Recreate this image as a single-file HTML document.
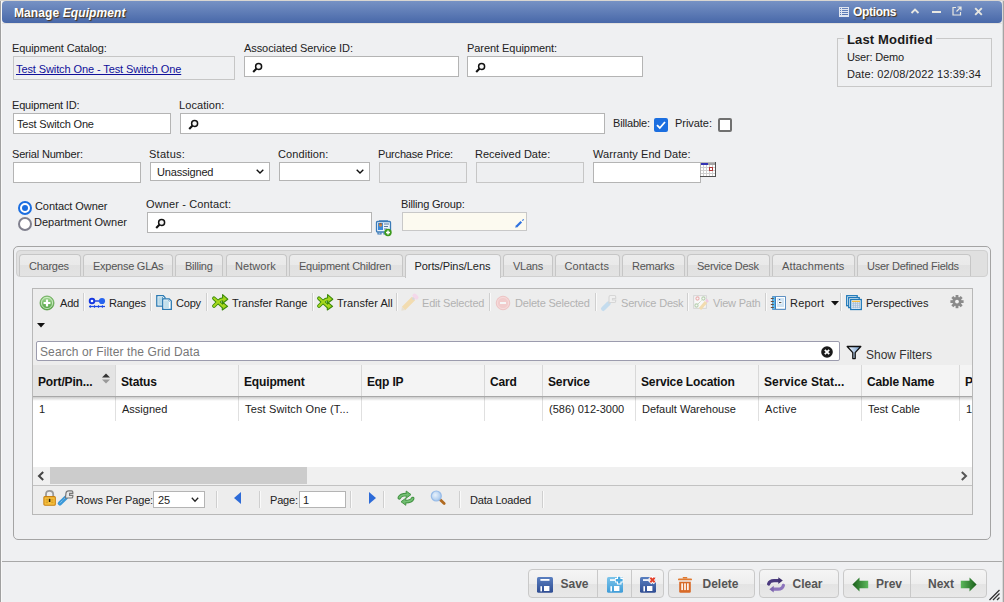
<!DOCTYPE html>
<html><head><meta charset="utf-8">
<style>
*{box-sizing:border-box;margin:0;padding:0}
html,body{width:1004px;height:602px;overflow:hidden;background:#eff0f2;font-family:"Liberation Sans",sans-serif;font-size:11px;color:#222}
.a{position:absolute}
svg.a{overflow:visible}
.t{position:absolute;white-space:nowrap;line-height:15px;letter-spacing:-0.18px}
.box{position:absolute;background:#fff;border:1px solid #b4b4b4}
.dis{background:#eeeff1;border-color:#c6c6c6}
.tt{color:#fff;font-weight:bold;font-size:12px;text-shadow:1px 1px 1px #4a3010;letter-spacing:0.1px}
.link{color:#10109a;text-decoration:underline}
.tab{position:absolute;top:254px;height:22px;border:1px solid #c6c6c6;border-bottom:none;border-radius:4px 4px 0 0;background:linear-gradient(#ececec 0,#e9e9e9 50%,#e1e1e1 50%,#e3e3e3 100%);color:#555;line-height:22px;padding-left:9px;letter-spacing:-0.25px;white-space:nowrap}
.tab.act{background:#eff0f2;color:#222;height:24px;z-index:2}
.tb{position:absolute;top:296px;line-height:14px;color:#222;white-space:nowrap;letter-spacing:-0.2px}
.tb.d{color:#b2b2b2}
.sep{position:absolute;top:293px;width:1px;height:18px;background:#cfcfcf;box-shadow:1px 0 0 #fafafa}
.psep{position:absolute;top:491px;width:1px;height:17px;background:#cfcfcf;box-shadow:1px 0 0 #fafafa}
.hd{position:absolute;top:365px;height:31px;line-height:35px;font-weight:bold;font-size:12px;letter-spacing:-0.15px;color:#111;padding-left:5px;border-right:1px solid #d8d8d8;white-space:nowrap;background:#f4f4f4}
.cell{position:absolute;top:396px;height:25px;line-height:27px;color:#222;padding-left:6px;border-right:1px solid #e0e0e0;white-space:nowrap}
.btn{position:absolute;top:569px;height:29px;border:1px solid #c9c9c9;border-radius:4px;background:linear-gradient(#f5f5f5 0,#eeeeee 50%,#e4e4e4 52%,#e8e8e8 100%);font-weight:bold;color:#555;font-size:12px}
.btn span{position:absolute;top:7px;line-height:15px}
.vd{position:absolute;top:0;width:1px;height:27px;background:#c9c9c9}
</style></head><body>
<div class="a" style="left:0;top:0;width:1px;height:602px;background:#a0a0a0"></div>
<div class="a" style="left:1px;top:0;width:1px;height:602px;background:#f8f8f8"></div>
<div class="a" style="left:1002px;top:0;width:2px;height:602px;background:#d9d9d9"></div>
<div class="a" style="left:1003px;top:0;width:1px;height:602px;background:#a4a4a4"></div>
<div class="a" style="left:0;top:0;width:1004px;height:1px;background:#d9d6d1"></div>
<div class="a" style="left:2px;top:23px;width:1000px;height:1px;background:#e3e1de"></div>
<div class="a" style="left:2px;top:1px;width:1000px;height:22px;border-radius:4px;background:linear-gradient(#7792c4,#4868a9)"></div>
<div class="t tt" style="left:14px;top:6px;line-height:15px">Manage <i>Equipment</i></div>
<!-- options -->
<svg class="a" style="left:839px;top:7px" width="10" height="10" viewBox="0 0 10 10"><g fill="none" stroke="#dfe5f0" stroke-width="1"><rect x="0.5" y="0.5" width="9" height="9"/><path d="M0 2.5H10M0 4.5H10M0 6.5H10M0 8.5H10M2.5 0V10"/></g></svg>
<div class="t tt" style="left:853px;top:5px;letter-spacing:-0.3px">Options</div>
<svg class="a" style="left:910px;top:7px" width="10" height="8" viewBox="0 0 10 8"><path d="M1.5 6L5 2.5L8.5 6" fill="none" stroke="#e8e8e2" stroke-width="1.8"/></svg>
<div class="a" style="left:932px;top:11px;width:9px;height:2px;background:#e8e8e2"></div>
<svg class="a" style="left:952px;top:6px" width="10" height="10" viewBox="0 0 10 10"><g fill="none" stroke="#e8e8e2" stroke-width="1.2"><path d="M4 1.5H1V9H8.5V6"/><path d="M5.5 1H9V4.5M9 1L4.5 5.5"/></g></svg>
<svg class="a" style="left:974px;top:7px" width="9" height="9" viewBox="0 0 9 9"><path d="M1.2 1.2L7.8 7.8M7.8 1.2L1.2 7.8" stroke="#e6e6e0" stroke-width="1.9"/></svg>

<!-- row 1 -->
<div class="t" style="left:12px;top:41px;letter-spacing:-0.1px">Equipment Catalog:</div>
<div class="box dis" style="left:13px;top:56px;width:222px;height:24px;background:#eff0f2"></div>
<div class="t link" style="left:16px;top:62px;letter-spacing:-0.1px">Test Switch One - Test Switch One</div>
<div class="t" style="left:244px;top:41px;letter-spacing:-0.08px">Associated Service ID:</div>
<div class="box" style="left:244px;top:56px;width:215px;height:21px"></div>
<div class="t" style="left:467px;top:41px;letter-spacing:-0.06px">Parent Equipment:</div>
<div class="box" style="left:467px;top:56px;width:176px;height:21px"></div>

<!-- last modified -->
<div class="a" style="left:837px;top:38px;width:155px;height:49px;border:1px solid #c8c8c8"></div>
<div class="t" style="left:844px;top:32px;padding:0 3px;background:#eff0f2;font-weight:bold;font-size:13px;color:#1a1a1a;letter-spacing:0.15px">Last Modified</div>
<div class="t" style="left:847px;top:50px">User: Demo</div>
<div class="t" style="left:847px;top:67px;letter-spacing:0.15px">Date: 02/08/2022 13:39:34</div>

<!-- row 2 -->
<div class="t" style="left:12px;top:98px">Equipment ID:</div>
<div class="box" style="left:13px;top:113px;width:158px;height:21px"></div>
<div class="t" style="left:17px;top:117px">Test Switch One</div>
<div class="t" style="left:179px;top:98px;letter-spacing:0.07px">Location:</div>
<div class="box" style="left:180px;top:113px;width:425px;height:21px"></div>
<div class="t" style="left:613px;top:116px">Billable:</div>
<div class="a" style="left:654px;top:118px;width:14px;height:14px;border-radius:2px;background:#1b6ee0"></div>
<svg class="a" style="left:654px;top:118px" width="14" height="14" viewBox="0 0 14 14"><path d="M3 7.2L5.8 10L11 4" fill="none" stroke="#fff" stroke-width="1.8"/></svg>
<div class="t" style="left:675px;top:116px;letter-spacing:-0.05px">Private:</div>
<div class="a" style="left:718px;top:118px;width:14px;height:14px;border-radius:2px;border:2px solid #707070;background:#fff"></div>

<!-- row 3 -->
<div class="t" style="left:12px;top:147px">Serial Number:</div>
<div class="box" style="left:13px;top:162px;width:128px;height:21px"></div>
<div class="t" style="left:149px;top:147px;letter-spacing:0.28px">Status:</div>
<div class="box" style="left:150px;top:162px;width:120px;height:19px"></div>
<div class="t" style="left:157px;top:165px">Unassigned</div>
<svg class="a" style="left:256px;top:169px" width="8" height="5" viewBox="0 0 8 5"><path d="M0.7 0.7L4 4L7.3 0.7" fill="none" stroke="#111" stroke-width="1.4"/></svg>
<div class="t" style="left:278px;top:147px;letter-spacing:0.09px">Condition:</div>
<div class="box" style="left:279px;top:162px;width:91px;height:19px"></div>
<svg class="a" style="left:356px;top:169px" width="8" height="5" viewBox="0 0 8 5"><path d="M0.7 0.7L4 4L7.3 0.7" fill="none" stroke="#111" stroke-width="1.4"/></svg>
<div class="t" style="left:378px;top:147px">Purchase Price:</div>
<div class="box dis" style="left:379px;top:162px;width:88px;height:21px"></div>
<div class="t" style="left:475px;top:147px;letter-spacing:0px">Received Date:</div>
<div class="box dis" style="left:476px;top:162px;width:108px;height:21px"></div>
<div class="t" style="left:593px;top:147px;letter-spacing:0.08px">Warranty End Date:</div>
<div class="box" style="left:593px;top:162px;width:108px;height:21px"></div>

<!-- row 4 -->
<div class="a" style="left:18px;top:201px;width:14px;height:14px;border-radius:50%;border:2px solid #1b6ee0;background:#fff"></div>
<div class="a" style="left:22px;top:205px;width:6px;height:6px;border-radius:50%;background:#1b6ee0"></div>
<div class="t" style="left:35px;top:199px;letter-spacing:-0.08px">Contact Owner</div>
<div class="a" style="left:18px;top:217px;width:14px;height:14px;border-radius:50%;border:2px solid #80808e;background:#fff"></div>
<div class="t" style="left:34px;top:215px;letter-spacing:0px">Department Owner</div>
<div class="t" style="left:146px;top:197px;letter-spacing:0.13px">Owner - Contact:</div>
<div class="box" style="left:147px;top:212px;width:225px;height:21px"></div>
<div class="t" style="left:401px;top:197px">Billing Group:</div>
<div class="box" style="left:402px;top:212px;width:125px;height:19px;background:#fcfaf0;border-color:#c8c8c8"></div>

<!-- tab panel -->
<div class="a" style="left:13px;top:246px;width:978px;height:294px;border:1px solid #a4a4a4;border-radius:5px"></div>
<div class="a" style="left:16px;top:250px;width:972px;height:27px;border:1px solid #d0d0d0;border-radius:4px;background:#e0e0e0"></div>
<div class="tab" style="left:19px;width:62px">Charges</div>
<div class="tab" style="left:83px;width:90px">Expense GLAs</div>
<div class="tab" style="left:175px;width:48px">Billing</div>
<div class="tab" style="left:226px;width:61px;padding-left:8px;letter-spacing:0.05px">Network</div>
<div class="tab" style="left:289px;width:114px">Equipment Children</div>
<div class="tab act" style="left:405px;width:96px;padding-left:8.5px;letter-spacing:-0.08px">Ports/Pins/Lens</div>
<div class="tab" style="left:503px;width:50px">VLans</div>
<div class="tab" style="left:555px;width:65px;padding-left:8.5px;letter-spacing:0.14px">Contacts</div>
<div class="tab" style="left:622px;width:63px">Remarks</div>
<div class="tab" style="left:687px;width:83px">Service Desk</div>
<div class="tab" style="left:772px;width:83px;letter-spacing:0.12px">Attachments</div>
<div class="tab" style="left:857px;width:114px">User Defined Fields</div>

<!-- grid panel -->
<div class="a" style="left:32px;top:288px;width:941px;height:227px;border:1px solid #b8b8b8;background:#ededed"></div>
<div class="tb" style="left:60px">Add</div>
<div class="sep" style="left:83px"></div>
<div class="tb" style="left:109px">Ranges</div>
<div class="sep" style="left:150px"></div>
<div class="tb" style="left:176px">Copy</div>
<div class="sep" style="left:206px"></div>
<div class="tb" style="left:232px;letter-spacing:-0.05px">Transfer Range</div>
<div class="sep" style="left:312px"></div>
<div class="tb" style="left:337px;letter-spacing:0.05px">Transfer All</div>
<div class="sep" style="left:396px"></div>
<div class="tb d" style="left:422px">Edit Selected</div>
<div class="sep" style="left:489px"></div>
<div class="tb d" style="left:515px">Delete Selected</div>
<div class="sep" style="left:595px"></div>
<div class="tb d" style="left:621px">Service Desk</div>
<div class="sep" style="left:687px"></div>
<div class="tb d" style="left:713px">View Path</div>
<div class="sep" style="left:765px"></div>
<div class="tb" style="left:790px;letter-spacing:0.2px">Report</div>
<div class="sep" style="left:840px"></div>
<div class="tb" style="left:866px;letter-spacing:-0.05px">Perspectives</div>
<svg class="a" style="left:37px;top:323px" width="8" height="5" viewBox="0 0 8 5"><path d="M0 0H8L4 4.5Z" fill="#111"/></svg>

<div class="box" style="left:36px;top:341px;width:804px;height:20px;border-radius:2px;border-color:#9c9cae"></div>
<div class="t" style="left:40px;top:345px;font-size:12px;color:#777;letter-spacing:0;letter-spacing:0.1px">Search or Filter the Grid Data</div>
<div class="t" style="left:866px;top:348px;font-size:12px;color:#333;letter-spacing:0">Show Filters</div>

<!-- grid -->
<div class="a" style="left:33px;top:365px;width:939px;height:102px;background:#fff"></div>
<div class="hd" style="left:33px;width:83px; background:#e4e4e4">Port/Pin...</div>
<div class="hd" style="left:116px;width:123px;">Status</div>
<div class="hd" style="left:239px;width:123px;">Equipment</div>
<div class="hd" style="left:362px;width:123px;">Eqp IP</div>
<div class="hd" style="left:485px;width:58px;">Card</div>
<div class="hd" style="left:543px;width:93px;">Service</div>
<div class="hd" style="left:636px;width:123px;">Service Location</div>
<div class="hd" style="left:759px;width:103px;letter-spacing:0.12px">Service Stat...</div>
<div class="hd" style="left:862px;width:98px;">Cable Name</div>
<div class="hd" style="left:960px;width:12px;border-right:none;overflow:hidden;">P</div>
<svg class="a" style="left:102px;top:373px" width="8" height="12" viewBox="0 0 8 12"><path d="M0 4.5L4 0.5L8 4.5Z" fill="#333"/><path d="M0 6.5L4 10.5L8 6.5Z" fill="#999"/></svg>
<div class="cell" style="left:33px;width:83px;">1</div>
<div class="cell" style="left:116px;width:123px;">Assigned</div>
<div class="cell" style="left:239px;width:123px;letter-spacing:0.15px">Test Switch One (T...</div>
<div class="cell" style="left:362px;width:123px;"></div>
<div class="cell" style="left:485px;width:58px;"></div>
<div class="cell" style="left:543px;width:93px;">(586) 012-3000</div>
<div class="cell" style="left:636px;width:123px;">Default Warehouse</div>
<div class="cell" style="left:759px;width:103px;letter-spacing:0.35px">Active</div>
<div class="cell" style="left:862px;width:98px;">Test Cable</div>
<div class="cell" style="left:960px;width:12px;border-right:none;overflow:hidden;">1</div>
<div class="a" style="left:33px;top:396px;width:939px;height:1px;background:#a8a8a8"></div>
<div class="a" style="left:33px;top:397px;width:939px;height:4px;background:linear-gradient(rgba(0,0,0,0.2),rgba(0,0,0,0))"></div>
<!-- scrollbar -->
<div class="a" style="left:33px;top:467px;width:939px;height:18px;background:#f0f0f0"></div>
<div class="a" style="left:50px;top:467px;width:257px;height:17px;background:#cccccc"></div>
<svg class="a" style="left:37px;top:471px" width="8" height="10" viewBox="0 0 8 10"><path d="M6.2 1L2 5L6.2 9" fill="none" stroke="#444" stroke-width="2"/></svg>
<svg class="a" style="left:960px;top:471px" width="8" height="10" viewBox="0 0 8 10"><path d="M1.8 1L6 5L1.8 9" fill="none" stroke="#555" stroke-width="2"/></svg>
<!-- pager -->
<div class="a" style="left:33px;top:485px;width:939px;height:1px;background:#c2c2c2"></div>
<div class="t" style="left:76px;top:493px">Rows Per Page:</div>
<div class="box" style="left:153px;top:491px;width:52px;height:17px"></div>
<div class="t" style="left:158px;top:493px">25</div>
<svg class="a" style="left:191px;top:497px" width="8" height="6" viewBox="0 0 8 6"><path d="M0.8 0.8L4 4.2L7.2 0.8" fill="none" stroke="#222" stroke-width="1.3"/></svg>
<div class="psep" style="left:216px"></div>
<svg class="a" style="left:234px;top:492px" width="7" height="12" viewBox="0 0 7 12"><path d="M7 0L0 6L7 12Z" fill="#2d6bd8"/></svg>
<div class="psep" style="left:259px"></div>
<div class="t" style="left:270px;top:493px">Page:</div>
<div class="box" style="left:299px;top:491px;width:47px;height:17px"></div>
<div class="t" style="left:303px;top:493px">1</div>
<div class="psep" style="left:350px"></div>
<svg class="a" style="left:369px;top:492px" width="7" height="12" viewBox="0 0 7 12"><path d="M0 0L7 6L0 12Z" fill="#2d6bd8"/></svg>
<div class="psep" style="left:383px"></div>
<div class="psep" style="left:459px"></div>
<div class="t" style="left:470px;top:493px">Data Loaded</div>
<div class="psep" style="left:542px"></div>

<!-- bottom -->
<div class="a" style="left:2px;top:561px;width:1000px;height:1px;background:#a8a8a8"></div>
<div class="btn" style="left:528px;width:136px"><span style="left:31.5px">Save</span><div class="vd" style="left:68px"></div><div class="vd" style="left:102px"></div></div>
<div class="btn" style="left:668px;width:87px"><span style="left:33.5px">Delete</span></div>
<div class="btn" style="left:759px;width:80px"><span style="left:32.5px">Clear</span></div>
<div class="btn" style="left:843px;width:144px"><span style="left:32px">Prev</span><div class="vd" style="left:66px"></div><span style="left:84px">Next</span></div>
<!-- icons -->
<svg class="a" style="left:252px;top:62px" width="11" height="11" viewBox="0 0 11 11"><circle cx="6.6" cy="4.4" r="3" fill="#f6f6f6" stroke="#111" stroke-width="1.5"/><path d="M4.6 6.5L1.2 9.9" stroke="#111" stroke-width="2.1"/></svg>
<svg class="a" style="left:475px;top:62px" width="11" height="11" viewBox="0 0 11 11"><circle cx="6.6" cy="4.4" r="3" fill="#f6f6f6" stroke="#111" stroke-width="1.5"/><path d="M4.6 6.5L1.2 9.9" stroke="#111" stroke-width="2.1"/></svg>
<svg class="a" style="left:188px;top:119px" width="11" height="11" viewBox="0 0 11 11"><circle cx="6.6" cy="4.4" r="3" fill="#f6f6f6" stroke="#111" stroke-width="1.5"/><path d="M4.6 6.5L1.2 9.9" stroke="#111" stroke-width="2.1"/></svg>
<svg class="a" style="left:155px;top:218px" width="11" height="11" viewBox="0 0 11 11"><circle cx="6.6" cy="4.4" r="3" fill="#f6f6f6" stroke="#111" stroke-width="1.5"/><path d="M4.6 6.5L1.2 9.9" stroke="#111" stroke-width="2.1"/></svg>
<svg class="a" style="left:700px;top:162px" width="17" height="16" viewBox="0 0 17 16" shape-rendering="crispEdges">
<rect x="0" y="0" width="16" height="15" fill="#cfcfcf"/>
<rect x="0" y="0" width="16" height="1" fill="#b8b8b8"/>
<rect x="1" y="1" width="7" height="2" fill="#3434b4"/><rect x="8" y="1" width="7" height="2" fill="#a4a4a4"/>
<rect x="1" y="3" width="2" height="2" fill="#fff"/><rect x="1" y="6" width="2" height="2" fill="#fff"/><rect x="1" y="9" width="2" height="2" fill="#fff"/><rect x="1" y="12" width="2" height="2" fill="#fff"/><rect x="4" y="3" width="2" height="2" fill="#fff"/><rect x="4" y="6" width="2" height="2" fill="#fff"/><rect x="4" y="9" width="2" height="2" fill="#fff"/><rect x="4" y="12" width="2" height="2" fill="#fff"/><rect x="7" y="3" width="2" height="2" fill="#fff"/><rect x="7" y="6" width="2" height="2" fill="#fff"/><rect x="7" y="9" width="2" height="2" fill="#fff"/><rect x="7" y="12" width="2" height="2" fill="#fff"/><rect x="10" y="3" width="2" height="2" fill="#fff"/><rect x="10" y="6" width="2" height="2" fill="#fff"/><rect x="10" y="9" width="2" height="2" fill="#fff"/><rect x="10" y="12" width="2" height="2" fill="#fff"/><rect x="13" y="3" width="2" height="2" fill="#fff"/><rect x="13" y="6" width="2" height="2" fill="#fff"/><rect x="13" y="9" width="2" height="2" fill="#fff"/><rect x="13" y="12" width="2" height="2" fill="#fff"/>
<rect x="9" y="5" width="4" height="1" fill="#b03a3a"/><rect x="9" y="8" width="4" height="1" fill="#b03a3a"/><rect x="9" y="5" width="1" height="4" fill="#b03a3a"/><rect x="12" y="5" width="1" height="4" fill="#b03a3a"/>
<rect x="15" y="0" width="1" height="15" fill="#505050"/><rect x="0" y="14" width="16" height="1" fill="#505050"/>
<rect x="0" y="0" width="1" height="14" fill="#b4b4b4"/>
</svg>
<svg class="a" style="left:375px;top:219.5px" width="18" height="17" viewBox="0 0 18 17">
<rect x="1.5" y="1.5" width="14" height="10.5" rx="1" fill="#eaf3fb" stroke="#3a7ab8" stroke-width="1.3"/>
<rect x="4" y="0.3" width="9" height="1.2" fill="#3a7ab8"/>
<rect x="3" y="3" width="5" height="7" fill="#3a88d8"/>
<circle cx="5.5" cy="5" r="1.8" fill="#c88a50"/><path d="M3.8 4.2Q5.5 2.3 7.2 4.2" fill="#8a4a20"/>
<path d="M9 4H14M9 6.5H13M9 9H12" stroke="#5a7aa0" stroke-width="1"/>
<path d="M3 12.5V14H6V12.5M9 12.5V14H12" fill="none" stroke="#3a7ab8" stroke-width="1.2"/>
<circle cx="13" cy="12.5" r="3.7" fill="#3d9a1e"/><path d="M13 10.5V14.5M11 12.5H15" stroke="#fff" stroke-width="1.5"/>
</svg>
<svg class="a" style="left:514px;top:218px" width="11" height="11" viewBox="0 0 11 11">
<path d="M2.3 8.7L7.3 3.7" stroke="#2f72e0" stroke-width="2.2"/><path d="M1.2 9.8L1.9 7.6L3.4 9.1Z" fill="#2f72e0"/><path d="M8.6 1.6L9.4 2.4" stroke="#2f72e0" stroke-width="2"/>
</svg>
<svg class="a" style="left:39px;top:295px" width="16" height="16" viewBox="0 0 16 16">
<defs><linearGradient id="ga" x1="0" y1="0" x2="0" y2="1"><stop offset="0" stop-color="#a6dc98"/><stop offset="1" stop-color="#4e9e3e"/></linearGradient></defs>
<circle cx="8" cy="8" r="7" fill="url(#ga)" stroke="#5aa048" stroke-width="0.8"/><circle cx="8" cy="8" r="5.6" fill="none" stroke="#e4f4de" stroke-width="0.9" opacity="0.8"/>
<path d="M8 4.6V11.4M4.6 8H11.4" stroke="#fff" stroke-width="2.2"/>
</svg>
<svg class="a" style="left:88px;top:296px" width="18" height="14" viewBox="0 0 18 14">
<circle cx="4" cy="5" r="2.3" fill="#fff" stroke="#1436e0" stroke-width="1.9"/>
<path d="M6.2 5H11.5" stroke="#1a40e0" stroke-width="1.4"/>
<circle cx="14" cy="5" r="3.1" fill="#2664ee"/>
<path d="M1 10.5H17" stroke="#1a48e6" stroke-width="1.2"/>
<path d="M2.3 9.2V11.8M6.5 9.2V11.8M10.5 9.2V11.8M14.4 9.2V11.8" stroke="#1a48e6" stroke-width="1.1"/>
</svg>
<svg class="a" style="left:154px;top:292px" width="20" height="20" viewBox="0 0 20 20">
<path d="M2.8 3.7H9.3L11 5.4V14.2H2.8Z" fill="#fff" stroke="#2a7ab2" stroke-width="1.3"/>
<rect x="4.2" y="5.2" width="4.6" height="7.6" fill="#b6d9e8"/>
<path d="M8.7 6.8H15.2L17.3 8.9V17.4H8.7Z" fill="#fff" stroke="#2a7ab2" stroke-width="1.3"/>
<rect x="10.1" y="8.3" width="4.8" height="7.8" fill="#c2e0ec"/>
<path d="M8.3 5.3L9.5 6.3M14.5 8.3L15.7 9.3" stroke="#2a7ab2" stroke-width="1"/>
</svg>
<svg class="a" style="left:209px;top:292px" width="22" height="20" viewBox="0 0 22 20">
<g fill="none" stroke="#3a8a0a" stroke-width="3.8" stroke-linecap="round"><path d="M5 6.3L13.5 14"/><path d="M5 14L9.5 9.5Q11.5 7.2 14 7.2"/></g>
<path d="M13.6 2.6L18.8 7.2L13.6 11.2Z" fill="#a4d41c" stroke="#3a8a0a" stroke-width="1.1" stroke-linejoin="round"/>
<path d="M13.3 9.8L18.6 14.3L13.3 18Z" fill="#a4d41c" stroke="#3a8a0a" stroke-width="1.1" stroke-linejoin="round"/>
<g fill="none" stroke="#a6d81e" stroke-width="2" stroke-linecap="round"><path d="M5 6.3L13.8 14.2"/><path d="M5 14L9.5 9.5Q11.5 7.2 14.2 7.2"/></g>
</svg>
<svg class="a" style="left:314px;top:292px" width="22" height="20" viewBox="0 0 22 20">
<g fill="none" stroke="#3a8a0a" stroke-width="3.8" stroke-linecap="round"><path d="M5 6.3L13.5 14"/><path d="M5 14L9.5 9.5Q11.5 7.2 14 7.2"/></g>
<path d="M13.6 2.6L18.8 7.2L13.6 11.2Z" fill="#a4d41c" stroke="#3a8a0a" stroke-width="1.1" stroke-linejoin="round"/>
<path d="M13.3 9.8L18.6 14.3L13.3 18Z" fill="#a4d41c" stroke="#3a8a0a" stroke-width="1.1" stroke-linejoin="round"/>
<g fill="none" stroke="#a6d81e" stroke-width="2" stroke-linecap="round"><path d="M5 6.3L13.8 14.2"/><path d="M5 14L9.5 9.5Q11.5 7.2 14.2 7.2"/></g>
</svg>
<svg class="a" style="left:398px;top:292px" width="22" height="20" viewBox="0 0 22 20">
<path d="M5.5 16.5L15.5 6.5" stroke="#f2dcb0" stroke-width="4.6"/>
<path d="M15 5L17 7" stroke="#d8d8d8" stroke-width="4"/>
<path d="M16.5 3.5L18.5 5.5" stroke="#f4d8ea" stroke-width="4" stroke-linecap="round"/>
<path d="M3.3 18.7L4 14.8L7.3 18Z" fill="#e8e0d0"/>
</svg>
<svg class="a" style="left:492px;top:292px" width="22" height="20" viewBox="0 0 22 20">
<circle cx="11" cy="11" r="6.8" fill="#f1cccc" stroke="#ecc0c0" stroke-width="0.8"/><circle cx="11" cy="11" r="5.6" fill="none" stroke="#f6dede" stroke-width="0.8"/>
<rect x="8" y="10" width="6" height="2" fill="#f6f6f6"/>
</svg>
<svg class="a" style="left:598px;top:292px" width="22" height="20" viewBox="0 0 22 20">
<path d="M5.2 16.8L10.5 11.5" stroke="#c4dcee" stroke-width="4.4" stroke-linecap="round"/>
<path d="M11 11L11 5Q11 3.5 12.5 3.5H16.5Q17.7 3.5 17.7 5V6.5H14.5V8H17.7V9Q17.7 10.5 16.5 10.5H12Z" fill="#f0f0f0" stroke="#d6d6d6" stroke-width="1.1"/>
</svg>
<svg class="a" style="left:690px;top:292px" width="22" height="20" viewBox="0 0 22 20">
<rect x="3.7" y="3.7" width="12.6" height="12.6" fill="#f8f8f8" stroke="#d4d4d4" stroke-width="1"/>
<circle cx="7.5" cy="6.5" r="1.6" fill="none" stroke="#e8b0b0" stroke-width="1.1"/><circle cx="13.4" cy="6.5" r="1.6" fill="none" stroke="#b8d0b0" stroke-width="1.1"/>
<circle cx="6.5" cy="13.5" r="1.6" fill="none" stroke="#b8d0b0" stroke-width="1.1"/>
<path d="M8 12L12 8" stroke="#b8d0b0" stroke-width="1" stroke-dasharray="1 0.8"/>
<path d="M10 17L16 10" stroke="#f2dcb0" stroke-width="3.2"/><path d="M16.2 9.5L18 8" stroke="#f0c8e0" stroke-width="3"/>
</svg>
<svg class="a" style="left:768px;top:292px" width="22" height="20" viewBox="0 0 22 20">
<rect x="4.2" y="4.2" width="13.6" height="13.6" fill="#3c7ab8"/>
<rect x="4.8" y="4.8" width="2.2" height="12.4" fill="#5ab8ec"/>
<rect x="8" y="5" width="9" height="11.8" fill="#fff"/>
<rect x="9" y="6" width="7" height="9" fill="#d0e4f4"/>
<rect x="11" y="7" width="1.2" height="0.9" fill="#2a5aa0"/>
<rect x="10.2" y="9.3" width="3.8" height="2.6" fill="#fff"/><path d="M11 10.6H13.4" stroke="#444" stroke-width="1"/>
<path d="M2.8 6.5H5.8M2.8 9.5H5.8M2.8 12.5H5.8M2.8 15.5H5.8" stroke="#6a5040" stroke-width="1.1"/>
</svg>
<svg class="a" style="left:831px;top:301px" width="8" height="5" viewBox="0 0 8 5"><path d="M0 0H8L4 4.5Z" fill="#111"/></svg>
<svg class="a" style="left:843px;top:292px" width="22" height="20" viewBox="0 0 22 20">
<rect x="3.7" y="3.7" width="10.5" height="10" fill="#fff" stroke="#1e78b8" stroke-width="1.3"/>
<rect x="5.7" y="5.6" width="10.5" height="10" fill="#fff" stroke="#1e78b8" stroke-width="1.3"/>
<rect x="7.7" y="7.5" width="10.6" height="10" fill="#fff" stroke="#1e78b8" stroke-width="1.3"/>
<path d="M9 9.3H17" stroke="#f0b020" stroke-width="1.1"/>
<path d="M9 11.2H17M9 13.2H17M9 15.2H17M10.3 10V16.3M12.3 10V16.3M14.3 10V16.3M16.3 10V16.3" stroke="#9cbad6" stroke-width="0.9"/>
</svg>
<svg class="a" style="left:950px;top:295px" width="14" height="14" viewBox="0 0 14 14">
<g transform="translate(7,6.6)" fill="#8a8a8a">
<circle r="4.6"/>
<rect x="-1.4" y="-6.6" width="2.8" height="13.2"/><rect x="-1.4" y="-6.6" width="2.8" height="13.2" transform="rotate(45)"/><rect x="-1.4" y="-6.6" width="2.8" height="13.2" transform="rotate(90)"/><rect x="-1.4" y="-6.6" width="2.8" height="13.2" transform="rotate(135)"/>
<circle r="1.9" fill="#f2f2f2"/>
</g></svg>
<svg class="a" style="left:821px;top:346px" width="12" height="12" viewBox="0 0 12 12">
<circle cx="6" cy="6" r="5.8" fill="#1a1a1a"/><path d="M3.8 3.8L8.2 8.2M8.2 3.8L3.8 8.2" stroke="#fff" stroke-width="1.8"/>
</svg>
<svg class="a" style="left:846px;top:345px" width="16" height="15" viewBox="0 0 16 15">
<defs><linearGradient id="gf" x1="0" y1="0" x2="1" y2="0"><stop offset="0" stop-color="#ffffff"/><stop offset="1" stop-color="#6a9ad0"/></linearGradient></defs>
<path d="M1.2 1.5H14.8L9.2 7.6V13.6H6.8V7.6Z" fill="url(#gf)" stroke="#111" stroke-width="1.3" stroke-linejoin="round"/>
</svg>
<svg class="a" style="left:41.5px;top:487.5px" width="16" height="18" viewBox="0 0 16 18">
<path d="M4 9V6.3Q4 2.8 7.6 2.8Q11.2 2.8 11.2 6.3V9" fill="none" stroke="#9a9a9a" stroke-width="1.8"/>
<rect x="1.9" y="8.6" width="11.4" height="8.6" rx="1" fill="#f6c242" stroke="#c88010" stroke-width="1.1"/>
<path d="M3.6 11.3H6M3.6 13H6M3.6 14.7H6M9.2 11.3H11.6M9.2 13H11.6M9.2 14.7H11.6" stroke="#d89818" stroke-width="0.9"/>
<rect x="6.8" y="10.8" width="1.6" height="3.2" fill="#2a2008"/>
</svg>
<svg class="a" style="left:57px;top:488px" width="18" height="18" viewBox="0 0 18 18">
<path d="M2.8 15.4L9 9.4" stroke="#3a98d8" stroke-width="4.2" stroke-linecap="round"/>
<path d="M2.8 15.2L8.2 9.9" stroke="#a8d8f4" stroke-width="0.9" stroke-dasharray="1 1"/>
<path d="M8.4 10L9 5Q9.3 2.8 11.5 2.8H14.6Q15.8 2.8 15.8 4V5.4H12.6V7.4H15.8V8.7Q15.8 10 14.4 10Z" fill="#e8e8e8" stroke="#777" stroke-width="1.2"/>
</svg>
<svg class="a" style="left:396px;top:489px" width="20" height="19" viewBox="-1.2 -0.8 22.4 20.4">
<g fill="none" stroke="#3f8f3f" stroke-width="4" stroke-linecap="round"><path d="M2.5 8.6Q4 5 10.5 5"/><path d="M17.5 9.4Q16 13 9.5 13"/></g>
<path d="M10.2 1L15.6 5L10.2 9Z" fill="#6cba6c" stroke="#3f8f3f" stroke-width="1" stroke-linejoin="round"/>
<path d="M9.8 9L4.4 13L9.8 17Z" fill="#6cba6c" stroke="#3f8f3f" stroke-width="1" stroke-linejoin="round"/>
<g fill="none" stroke="#74c074" stroke-width="2" stroke-linecap="round"><path d="M2.6 8.4Q4 5 11 5"/><path d="M17.4 9.6Q16 13 9 13"/></g>
</svg>
<svg class="a" style="left:429px;top:489px" width="18" height="18" viewBox="0 0 18 18">
<defs><radialGradient id="gm" cx="0.4" cy="0.4" r="0.7"><stop offset="0" stop-color="#e8f2fc"/><stop offset="1" stop-color="#9cc0ea"/></radialGradient></defs>
<path d="M11 10.4L15.2 14.6" stroke="#b06a20" stroke-width="2.8" stroke-linecap="round"/>
<circle cx="7.3" cy="7" r="5" fill="url(#gm)" stroke="#98bce8" stroke-width="1.2"/>
</svg>
<svg class="a" style="left:536px;top:576px" width="18" height="18" viewBox="0 0 18 18">
<defs><linearGradient id="gs1" x1="0" y1="0" x2="0" y2="1"><stop offset="0" stop-color="#5a7fc0"/><stop offset="1" stop-color="#2e4c92"/></linearGradient></defs>
<rect x="1" y="1" width="16" height="15.8" rx="1.6" fill="url(#gs1)"/>
<rect x="4.4" y="3" width="9.1" height="1.8" fill="#fff"/>
<rect x="4.4" y="10.2" width="1.6" height="5.2" fill="#fff"/><rect x="8" y="10" width="5.4" height="5" fill="#fff"/>
</svg>
<svg class="a" style="left:606px;top:576px" width="18" height="18" viewBox="0 0 18 18">
<defs><linearGradient id="gs2" x1="0" y1="0" x2="0" y2="1"><stop offset="0" stop-color="#7cc4ea"/><stop offset="1" stop-color="#3e9cd8"/></linearGradient></defs>
<rect x="1" y="1" width="16" height="15.8" rx="1.6" fill="url(#gs2)"/>
<rect x="4" y="3.2" width="6" height="1.7" fill="#fff"/>
<rect x="4.4" y="10.2" width="1.6" height="5.2" fill="#fff"/><rect x="8" y="10" width="5.4" height="5" fill="#fff"/>
<path d="M13.2 0V8.4M9 4.2H17.4" stroke="#fff" stroke-width="4.6"/>
<path d="M13.2 0.8V7.6M9.8 4.2H16.6" stroke="#48a8e0" stroke-width="2.4"/>
</svg>
<svg class="a" style="left:639px;top:576px" width="18" height="18" viewBox="0 0 18 18">
<defs><linearGradient id="gs3" x1="0" y1="0" x2="0" y2="1"><stop offset="0" stop-color="#5a80c0"/><stop offset="1" stop-color="#2e4c92"/></linearGradient></defs>
<rect x="1" y="1" width="16" height="15.8" rx="1.6" fill="url(#gs3)"/>
<rect x="4" y="3.2" width="6" height="1.7" fill="#fff"/>
<rect x="4.4" y="10.2" width="1.6" height="5.2" fill="#fff"/><rect x="8" y="10" width="5.4" height="5" fill="#fff"/>
<path d="M10.8 1.3L16.2 6.7M16.2 1.3L10.8 6.7" stroke="#fff" stroke-width="4.2"/>
<path d="M11.3 1.8L15.7 6.2M15.7 1.8L11.3 6.2" stroke="#e2402a" stroke-width="2"/>
</svg>
<svg class="a" style="left:677px;top:576px" width="16" height="18" viewBox="0 0 16 18">
<rect x="5.8" y="1" width="4.4" height="1.5" fill="#e07a30"/>
<rect x="1" y="2.4" width="14" height="1.9" rx="0.9" fill="#e07a30"/>
<path d="M2.2 5.8H13.8V15.5Q13.8 16.8 12.5 16.8H3.5Q2.2 16.8 2.2 15.5Z" fill="#d86a28"/>
<rect x="4.3" y="7.3" width="1.6" height="6.8" fill="#fff"/><rect x="7.2" y="7.3" width="1.6" height="6.8" fill="#fff"/><rect x="10.1" y="7.3" width="1.6" height="6.8" fill="#fff"/>
</svg>
<svg class="a" style="left:767px;top:576px" width="18" height="18" viewBox="0 0 18 18">
<path d="M1.6 8Q2.6 4.6 7 4.6H12" fill="none" stroke="#4a3a7e" stroke-width="3.2" stroke-linecap="round"/>
<path d="M11.3 1.2L15.8 4.6L11.3 8Z" fill="#40326e"/>
<path d="M16.4 9.4Q15.4 13.2 11 13.2H6" fill="none" stroke="#8c74bc" stroke-width="3.2" stroke-linecap="round"/>
<path d="M6.7 9.8L2.4 13.2L6.7 16.6Z" fill="#7e66b0"/>
</svg>
<svg class="a" style="left:851px;top:577px" width="18" height="16" viewBox="0 0 18 16">
<defs><linearGradient id="gp" x1="0" y1="0" x2="1" y2="0"><stop offset="0" stop-color="#1a5e1a"/><stop offset="1" stop-color="#5cb85c"/></linearGradient></defs>
<path d="M1.4 7.5L8.5 0.5V3.7H17.2V11.3H8.5V14.5Z" fill="url(#gp)"/>
</svg>
<svg class="a" style="left:960px;top:577px" width="18" height="16" viewBox="0 0 18 16">
<defs><linearGradient id="gn" x1="0" y1="0" x2="1" y2="0"><stop offset="0" stop-color="#5cb85c"/><stop offset="1" stop-color="#1a5e1a"/></linearGradient></defs>
<path d="M16.6 7.5L9.5 0.5V3.7H0.8V11.3H9.5V14.5Z" fill="url(#gn)"/>
</svg>
<svg class="a" style="left:988px;top:589px" width="13" height="12" viewBox="0 0 13 12">
<path d="M1.5 11L11.5 1M5 11L11.5 4.5M9 11L11.5 8.5" stroke="#333" stroke-width="1.3"/>
</svg>
</body></html>
